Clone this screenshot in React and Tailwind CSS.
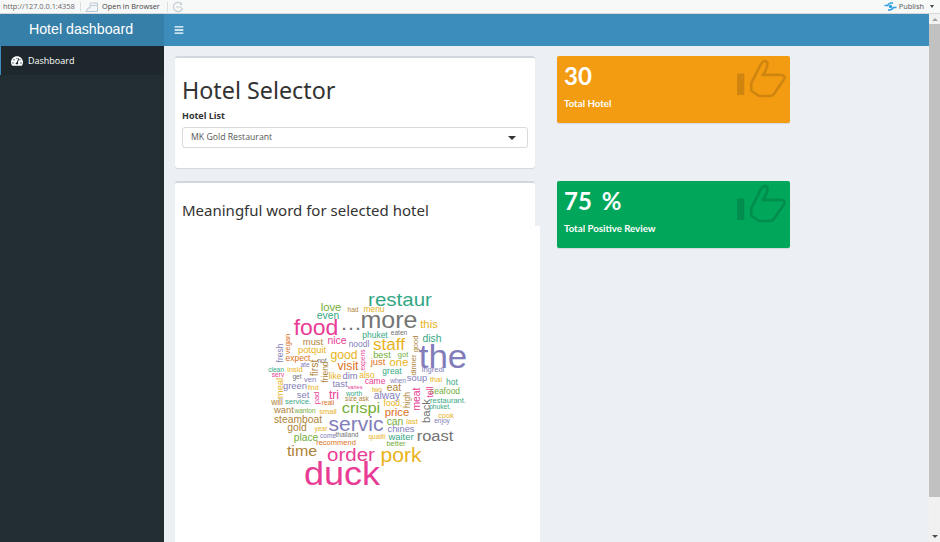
import { FaBars, FaTachometerAlt } from 'react-icons/fa'

const teal = 'text-[#1b9e77]'
const orange = 'text-[#d95f02]'
const purple = 'text-[#7570b3]'
const pink = 'text-[#e7298a]'
const green = 'text-[#66a61e]'
const yellow = 'text-[#e6ab02]'
const brown = 'text-[#a6761d]'
const gray = 'text-[#666666]'

// [word, center x, center y, font size, colour, rotated] in page coordinates
const words = [
  ['restaur', 400, 300, 20.5, teal], ['love', 331, 309, 12, green], ['even', 328, 317, 11, teal],
  ['had', 353, 311, 7, brown], ['menu', 374, 310, 9, yellow], ['food', 316, 330, 23, pink],
  ['…', 351, 324, 22, gray], ['more', 389, 322, 25, gray], ['this', 429, 326, 12, yellow],
  ['phuket', 375, 336, 9, teal], ['eaten', 399, 334, 7, gray], ['dish', 432, 340, 11, teal],
  ['must', 313, 343, 10, brown], ['nice', 337, 342, 11, pink], ['noodl', 359, 345, 9, purple],
  ['staff', 389, 346, 17, yellow], ['potquit', 312, 351, 10, yellow], ['good', 344, 356, 13, yellow],
  ['best', 382, 356, 10, green], ['got', 403, 356, 8, green], ['the', 443, 358, 35, purple],
  ['expect', 298, 359, 9, orange], ['not', 322, 362, 7, gray], ['just', 378, 363, 10, orange],
  ['one', 399, 364, 12, yellow], ['ate', 305, 366, 7, purple], ['visit', 348, 367, 13, orange],
  ['clean', 276, 371, 7, teal], ['insid', 295, 371, 8, yellow], ['ingredi', 433, 371, 8, purple],
  ['great', 392, 372, 9, teal], ['serv', 278, 376, 7, pink], ['also', 367, 376, 9, yellow],
  ['like', 335, 377, 9, yellow], ['dim', 350, 377, 10, purple], ['get', 297, 378, 7, gray],
  ['soup', 417, 379, 10, purple], ['ven', 310, 381, 8, purple], ['thai', 436, 381, 8, yellow],
  ['when', 398, 382, 7, purple], ['came', 375, 382, 9, pink], ['hot', 452, 383, 9, teal],
  ['tast', 340, 385, 10, purple], ['green', 295, 387, 10, purple], ['find', 313, 389, 7, yellow],
  ['varies', 355, 389, 6, pink], ['eat', 394, 389, 11, brown], ['two', 377, 391, 7, yellow],
  ['seafood', 445, 392, 9, green], ['worth', 354, 395, 7, teal], ['set', 303, 396, 10, purple],
  ['tri', 334, 396, 13, pink], ['alway', 387, 397, 11, purple], ['size ask', 357, 400, 7, brown],
  ['restaurant.', 448, 402, 8, teal], ['will', 277, 403, 9, brown], ['service.', 298, 403, 8, teal],
  ['food,', 393, 404, 9, yellow], ['reali', 328, 404, 7, orange], ['phuket.', 440, 408, 7, teal],
  ['crispi', 361, 409, 16.5, green], ['want', 284, 411, 10, brown], ['wanton', 305, 412, 7, green],
  ['small', 328, 413, 8, yellow], ['price', 397, 414, 12, orange], ['cook', 446, 417, 8, yellow],
  ['steamboat', 298, 421, 11, brown], ['enjoy', 442, 422, 7, purple], ['can', 395, 423, 11, green],
  ['last', 412, 423, 8, yellow], ['servic', 356, 426, 21, purple], ['gold', 297, 429, 11, brown],
  ['year', 321, 430, 7, yellow], ['chines', 401, 430, 10, purple], ['thailand', 347, 436, 7, gray],
  ['come', 328, 437, 7, purple], ['roast', 435, 437, 16.5, gray], ['qualiti', 377, 438, 7, yellow],
  ['waiter', 401, 438, 10, teal], ['place', 306, 439, 11, green], ['recommend', 336, 444, 8, orange],
  ['better', 396, 445, 8, green], ['time', 302, 452, 16, brown], ['order', 351, 455, 20.5, pink],
  ['pork', 401, 457, 21, yellow], ['duck', 342, 475, 36, pink],
  ['vegan', 288, 344, 8, orange, true], ['fresh', 280, 353, 9, purple, true], ['first', 315, 368, 11, brown, true],
  ['friend', 325, 372, 9, brown, true], ['expens', 363, 360, 7, pink, true], ['good', 416, 344, 8, brown, true],
  ['dinner', 414, 365, 8, brown, true], ['meal', 280, 388, 10, yellow, true], ['pad', 317, 398, 8, pink, true],
  ['high', 407, 400, 9, brown, true], ['meat', 417, 399, 11, pink, true], ['tell', 430, 392, 9, pink, true],
  ['back', 427, 411, 12, gray, true],
]

function ThumbOutline({ color }) {
  return (
    <svg width="53" height="43" viewBox="30 20 160 130" className="absolute left-[178px] top-[1px]" fill="none">
      <rect x="36" y="70" width="22" height="65" rx="2" fill={color} />
      <path
        d="M79 100L108 42Q120 24 128 38Q128 56 114 74H168Q184 76 178 87L148 131Q144 138 136 138H103L79 122Z"
        stroke={color}
        strokeWidth="8"
        strokeLinejoin="round"
      />
    </svg>
  )
}

function ValueBox({ value, label, color, iconColor }) {
  return (
    <div className={`${color} relative w-[233px] h-[67px] rounded-[2px] px-[7px] pt-[7px] text-white shadow-[0_1px_1px_rgba(0,0,0,0.1)] font-['Lato',sans-serif]`}>
      <p className="text-[24px] leading-[26px] font-bold [word-spacing:4px]">{value}</p>
      <p className="text-[9.7px] leading-[14px] font-bold mt-[7px]">{label}</p>
      <ThumbOutline color={iconColor} />
    </div>
  )
}

function WordCloud() {
  return (
    <div className="absolute left-0 top-[43px] w-[365px] h-[400px] bg-white font-['Liberation_Sans',sans-serif]">
      {words.map(([word, x, y, size, color, rotated]) => {
        const big = size >= 14
        return (
          <span
            key={word + x}
            className={`${color} absolute leading-none whitespace-nowrap opacity-90`}
            style={{
              left: x - 175,
              top: y - 226 - (rotated ? 0 : 1),
              fontSize: big ? size / 1.08 : size * 0.94,
              transform: `translate(-50%, -50%)${rotated ? ' rotate(-90deg)' : ''}${big ? ' scaleX(1.08)' : ''}`,
            }}
          >
            {word}
          </span>
        )
      })}
    </div>
  )
}

export default function App() {
  return (
    <div className="w-[940px] h-[542px] overflow-hidden flex flex-col bg-[#ecf0f5]">
      {/* RStudio viewer toolbar */}
      <div className="h-[14px] shrink-0 bg-[#f7f8f8] border-b border-[#d8d8d8] flex items-center text-[7.4px] text-[#444] font-['Open_Sans',sans-serif]">
        <span className="pl-[3px] w-[80px] text-[#666]">http://127.0.0.1:4358</span>
        <span className="w-px h-[10px] bg-[#ddd]" />
        <svg width="14" height="10" viewBox="0 0 14 10" className="ml-[4px]">
          <path d="M1 9.5L3 6H5V2.5Q5 1 6.5 1H12.5V9.5Z" fill="#f3f6f9" stroke="#b4c0cc" strokeWidth="0.9" />
          <path d="M5.5 3.5H12.5" stroke="#b4c0cc" strokeWidth="0.8" />
        </svg>
        <span className="ml-[3px]">Open in Browser</span>
        <span className="w-px h-[10px] bg-[#ddd] ml-[7px]" />
        <svg width="12" height="12" viewBox="0 0 12 12" className="ml-[4px]">
          <path d="M9.5 3A4.6 4.6 0 1 0 10.5 7" fill="none" stroke="#c5ced8" strokeWidth="1.3" />
          <path d="M4 6H10M9.5 1.5V3.5H7.5" fill="none" stroke="#c5ced8" strokeWidth="1" />
        </svg>
        <div className="ml-auto flex items-center pr-[6px]">
          <svg width="13" height="9" viewBox="0 0 13 9">
            <path d="M0.5 3.5H3.5Q5 1 7 1H9M12.5 5.5H9.5Q8 8 6 8H4" fill="none" stroke="#2f9fe0" strokeWidth="1.5" />
            <circle cx="6.5" cy="4.5" r="1.7" fill="#2f9fe0" />
          </svg>
          <span className="ml-[2px] text-[#555]">Publish</span>
          <span className="ml-[6px] border-x-[2.5px] border-x-transparent border-t-[3px] border-t-[#444]" />
        </div>
      </div>

      <div className="flex-1 flex min-h-0">
        <div className="flex-1 flex flex-col min-w-0">
          {/* Header */}
          <div className="h-[32px] shrink-0 flex bg-[#3c8dbc] text-white">
            <div className="w-[164px] bg-[#367fa9] flex items-center justify-center pr-[2px] text-[14.2px] font-['Liberation_Sans',sans-serif]">
              Hotel dashboard
            </div>
            <div className="pl-[10px] flex items-center">
              <FaBars size={10} />
            </div>
          </div>

          <div className="flex-1 flex min-h-0">
            {/* Sidebar */}
            <div className="w-[164px] shrink-0 bg-[#222d32]">
              <div className="h-[29px] bg-[#1e282c] border-l-[1px] border-[#3c8dbc] flex items-center pl-[10px] text-white text-[9px] font-['Open_Sans',sans-serif]">
                <FaTachometerAlt size={12} />
                <span className="ml-[5px]">Dashboard</span>
              </div>
            </div>

            {/* Content */}
            <div className="flex-1 pl-[11px] pt-[10px] flex flex-col gap-[13px] min-h-0">
              <div className="flex gap-[22px]">
                <div className="w-[360px] h-[112px] shrink-0 bg-white rounded-[3px] border-t-[2px] border-[#d2d6de] px-[7px] shadow-[0_1px_1px_rgba(0,0,0,0.1)]">
                  <h1 className="text-[23.3px] leading-[28px] mt-[18px] text-[#333] font-['Noto_Sans',sans-serif]">Hotel Selector</h1>
                  <p className="text-[9px] leading-[12px] font-bold text-[#333] mt-[6px] font-['Open_Sans',sans-serif]">Hotel List</p>
                  <div className="mt-[5px] h-[21px] border border-[#d9d9d9] rounded-[3px] flex items-center justify-between pl-[8px] pr-[11px] pt-[1px] text-[8.7px] text-[#555] font-['Open_Sans',sans-serif]">
                    <span>MK Gold Restaurant</span>
                    <span className="border-x-[4px] border-x-transparent border-t-[4px] border-t-[#333]" />
                  </div>
                </div>
                <ValueBox value="30" label="Total Hotel" color="bg-[#f39c12]" iconColor="#cf8510" />
              </div>

              <div className="flex gap-[22px] flex-1 min-h-0">
                <div className="relative w-[360px] h-[400px] shrink-0 bg-white rounded-[3px] border-t-[2px] border-[#d2d6de] px-[7px]">
                  <h3 className="text-[15px] leading-[18px] mt-[18px] text-[#333] font-['Noto_Sans',sans-serif]">Meaningful word for selected hotel</h3>
                  <WordCloud />
                </div>
                <ValueBox value="75 %" label="Total Positive Review" color="bg-[#00a65a]" iconColor="#008d4d" />
              </div>
            </div>
          </div>
        </div>

        {/* Scrollbar */}
        <div className="w-[11px] shrink-0 bg-[#f1f1f1] flex flex-col items-center">
          <span className="mt-[4px] border-x-[3px] border-x-transparent border-b-[3px] border-b-[#a3a3a3]" />
          <div className="mt-[3px] w-full h-[473px] bg-[#c1c1c1]" />
          <span className="mt-auto mb-[4px] border-x-[3px] border-x-transparent border-t-[3px] border-t-[#505050]" />
        </div>
      </div>
    </div>
  )
}
